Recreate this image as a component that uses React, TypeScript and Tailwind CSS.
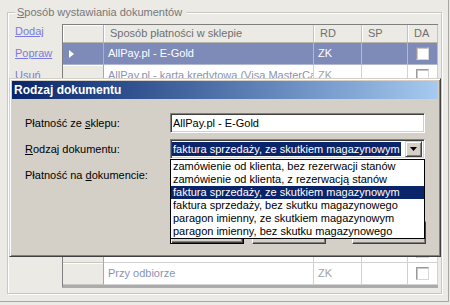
import React from "react";

// rows 3-10 sit under the dialog, so they are left blank
const rows = [
  { name: "AllPay.pl - E-Gold", rd: "ZK", selected: true },
  { name: "AllPay.pl - karta kredytowa (Visa MasterCard)", rd: "ZK" },
  { name: "", rd: "" },
  { name: "", rd: "" },
  { name: "", rd: "" },
  { name: "", rd: "" },
  { name: "", rd: "" },
  { name: "", rd: "" },
  { name: "", rd: "" },
  { name: "", rd: "" },
  { name: "Przy odbiorze", rd: "ZK" },
];

const documents = [
  "zamówienie od klienta, bez rezerwacji stanów",
  "zamówienie od klienta, z rezerwacją stanów",
  "faktura sprzedaży, ze skutkiem magazynowym",
  "faktura sprzedaży, bez skutku magazynowego",
  "paragon imienny, ze skutkiem magazynowym",
  "paragon imienny, bez skutku magazynowego",
];

function Checkbox() {
  return (
    <div className="h-[13px] w-[13px] border border-t-[#9a9a9a] border-l-[#9a9a9a] border-r-[#d6d6d6] border-b-[#d6d6d6] bg-white shadow-[inset_1px_1px_0_#c8c8c8]" />
  );
}

function Grid() {
  return (
    <div className="flex h-[264px] w-[376px] flex-col overflow-hidden border-t border-l border-[#7f7f7f] border-b-[3px] border-b-[#ababab] bg-white text-[11px]">
      <div className="flex h-[18px] shrink-0 border-b border-[#b9b6ad] bg-[#ebeae5] leading-[17px] text-[#6f6f6f]">
        <div className="w-[41px] border-r border-[#b9b6ad] shadow-[inset_1px_1px_0_#fff]" />
        <div className="w-[210px] border-r border-[#c6c3ba] pl-[6px] shadow-[inset_1px_0_0_#fff]">
          Sposób płatności w sklepie
        </div>
        <div className="w-[48px] border-r border-[#c6c3ba] pl-[6px] shadow-[inset_1px_0_0_#fff]">RD</div>
        <div className="w-[46px] border-r border-[#c6c3ba] pl-[6px] shadow-[inset_1px_0_0_#fff]">SP</div>
        <div className="w-[30px] border-r border-[#c6c3ba] pl-[6px] shadow-[inset_1px_0_0_#fff]">DA</div>
      </div>
      {rows.map((r, i) => (
        <div
          key={i}
          className={
            r.selected
              ? "flex h-[22px] shrink-0 bg-[#7e8ab8] leading-[21px] text-white"
              : "flex h-[22px] shrink-0 bg-white leading-[21px]"
          }
        >
          <div
            className={
              r.selected
                ? "flex w-[41px] items-center border-r border-b border-[#a9b0cc] pl-[6px]"
                : "w-[41px] border-r border-b border-r-[#a9a79f] border-b-[#c8c6be] bg-[#ebeae5] shadow-[inset_0_1px_0_#fff]"
            }
          >
            {r.selected && (
              <svg width="5" height="8" viewBox="0 0 5 8">
                <polygon points="0,0 5,4 0,8" fill="#fff" />
              </svg>
            )}
          </div>
          <div
            className={
              r.selected
                ? "w-[210px] overflow-hidden whitespace-nowrap border-r border-b border-[#b3b9d2] pl-[4px]"
                : "w-[210px] overflow-hidden whitespace-nowrap border-r border-b border-[#d2d2d2] pl-[4px] text-[#8893b2]"
            }
          >
            {r.name}
          </div>
          <div
            className={
              r.selected
                ? "w-[48px] border-r border-b border-[#b3b9d2] pl-[4px]"
                : "w-[48px] border-r border-b border-[#d2d2d2] pl-[4px] text-[#a2a2a2]"
            }
          >
            {r.rd}
          </div>
          <div
            className={
              r.selected
                ? "w-[46px] border-r border-b border-[#b3b9d2]"
                : "w-[46px] border-r border-b border-[#d2d2d2]"
            }
          />
          <div
            className={
              r.selected
                ? "flex w-[30px] items-center justify-center border-r border-b border-[#b3b9d2]"
                : "flex w-[30px] items-center justify-center border-r border-b border-[#d2d2d2]"
            }
          >
            <Checkbox />
          </div>
        </div>
      ))}
    </div>
  );
}

function Sunken({ children, className }: { children?: React.ReactNode; className?: string }) {
  return (
    <div
      className={
        "h-[20px] w-[255px] border border-t-[#808080] border-l-[#808080] border-r-white border-b-white bg-white shadow-[inset_1px_1px_0_#404040,inset_-1px_-1px_0_#d4d0c8] " +
        (className || "")
      }
    >
      {children}
    </div>
  );
}

function DropButton() {
  return (
    <div className="ml-auto mr-[2px] flex h-[16px] w-[17px] items-center justify-center border border-t-[#d4d0c8] border-l-[#d4d0c8] border-r-[#404040] border-b-[#404040] bg-[#d4d0c8] shadow-[inset_1px_1px_0_#fff,inset_-1px_-1px_0_#808080]">
      <svg width="7" height="4" viewBox="0 0 7 4">
        <polygon points="0,0 7,0 3.5,4" fill="#000" />
      </svg>
    </div>
  );
}

function Dialog() {
  return (
    <div className="absolute left-[9px] top-[78px] flex h-[179px] w-[432px] flex-col border border-t-[#d4d0c8] border-l-[#d4d0c8] border-r-[#404040] border-b-[#404040] bg-[#d4d0c8] p-[2px] shadow-[inset_1px_1px_0_#fff,inset_-1px_-1px_0_#808080]">
      <div className="h-[18px] shrink-0 bg-linear-to-r from-[#0a246a] to-[#a6caf0] pl-[2px] text-[12px] font-bold leading-[18px] text-white">
        Rodzaj dokumentu
      </div>
      <div className="pt-[14px] pl-[13px] text-[11px] text-black">
        <div className="grid grid-cols-[145px_255px] auto-rows-[20px] gap-y-[6px] leading-[20px]">
          <div>
            Płatność ze <span className="underline">s</span>klepu:
          </div>
          <Sunken className="pl-[2px] leading-[18px]">AllPay.pl - E-Gold</Sunken>

          <div>
            <span className="underline">R</span>odzaj dokumentu:
          </div>
          <div className="relative">
            <Sunken className="flex items-center">
              <span className="ml-[1px] bg-[#0a246a] px-[1px] leading-[14px] text-white">
                faktura sprzedaży, ze skutkiem magazynowym
              </span>
              <DropButton />
            </Sunken>
            <div className="absolute left-0 top-[20px] z-10 w-[255px] border border-black bg-white">
              {documents.map((d, i) => (
                <div
                  key={d}
                  className={
                    i === 2
                      ? "h-[13px] whitespace-nowrap bg-[#0a246a] pl-[2px] leading-[13px] text-white"
                      : "h-[13px] whitespace-nowrap pl-[2px] leading-[13px]"
                  }
                >
                  {d}
                </div>
              ))}
            </div>
          </div>

          <div>
            Płatność na <span className="underline">d</span>okumencie:
          </div>
          <Sunken className="flex items-center">
            <DropButton />
          </Sunken>
        </div>

        {/* dialog buttons, only their lower edges show below the open list */}
        <div className="mt-[36px] ml-[145px] flex h-[23px]">
          <div className="w-[74px] border border-black shadow-[inset_1px_1px_0_#fff,inset_-1px_-1px_0_#404040,inset_-2px_-2px_0_#808080]" />
          <div className="ml-[8px] w-[74px] border border-t-white border-l-white border-r-[#404040] border-b-[#404040] shadow-[inset_-1px_-1px_0_#808080]" />
          <div className="ml-[26px] w-[74px] border border-t-white border-l-white border-r-[#404040] border-b-[#404040] shadow-[inset_-1px_-1px_0_#808080]" />
        </div>
      </div>
    </div>
  );
}

export default function App() {
  return (
    <div className="relative h-[305px] w-[450px] overflow-hidden bg-[#ebeae5] font-['Liberation_Sans',Arial,sans-serif]">
      <div className="h-[302px] w-[449px] border-r border-b border-[#a7a6a0] pt-[5px] pl-[7px]">
        <fieldset className="h-[289px] w-[435px] border border-[#c9c7bf] shadow-[1px_1px_0_#fff,inset_1px_1px_0_#fff]">
          <legend className="ml-[7px] bg-[#ebeae5] pl-[2px] pr-[4px] text-[11px] leading-[14px] text-[#787878]">
            <span className="underline">S</span>posób wystawiania dokumentów
          </legend>
          <div className="flex pt-[5px]">
            <div className="flex w-[54px] flex-col gap-[8px] pl-[7px] text-[11px] leading-[14px] text-[#7a7ae0]">
              <span className="underline">Dodaj</span>
              <span className="underline">Popraw</span>
              <span className="underline">Usuń</span>
            </div>
            <Grid />
          </div>
        </fieldset>
      </div>
      <Dialog />
    </div>
  );
}
